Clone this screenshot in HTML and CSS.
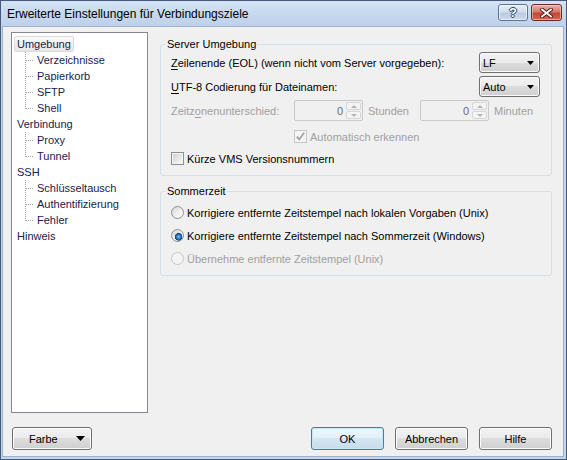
FILE: index.html
```html
<!DOCTYPE html>
<html lang="de">
<head>
<meta charset="utf-8">
<title>Erweiterte Einstellungen für Verbindungsziele</title>
<link rel="stylesheet" href="styles.css">
</head>
<body>
<div class="window">
  <div class="titlebar">
    <span class="title">Erweiterte Einstellungen für Verbindungsziele</span>
    <div class="caption-buttons">
      <div class="cap cap-help">?</div>
      <div class="cap cap-close">
        <svg width="13" height="10" viewBox="0 0 13 10">
          <path d="M2 1.5L11 8.5M11 1.5L2 8.5" stroke="#4a1a14" stroke-width="3.6" stroke-linecap="square" fill="none"/>
          <path d="M2 1.5L11 8.5M11 1.5L2 8.5" stroke="#ffffff" stroke-width="1.8" stroke-linecap="square" fill="none"/>
        </svg>
      </div>
    </div>
  </div>

  <div class="client">
    <div class="main">
      <ul class="tree">
        <li>
          <span class="node selected">Umgebung</span>
          <ul class="children">
            <li><span class="node">Verzeichnisse</span></li>
            <li><span class="node">Papierkorb</span></li>
            <li><span class="node">SFTP</span></li>
            <li><span class="node">Shell</span></li>
          </ul>
        </li>
        <li>
          <span class="node">Verbindung</span>
          <ul class="children">
            <li><span class="node">Proxy</span></li>
            <li><span class="node">Tunnel</span></li>
          </ul>
        </li>
        <li>
          <span class="node">SSH</span>
          <ul class="children">
            <li><span class="node">Schlüsseltausch</span></li>
            <li><span class="node">Authentifizierung</span></li>
            <li><span class="node">Fehler</span></li>
          </ul>
        </li>
        <li><span class="node">Hinweis</span></li>
      </ul>

      <div class="pane">
        <fieldset class="group">
          <legend>Server Umgebung</legend>
          <div class="row">
            <span class="label"><u>Z</u>eilenende (EOL) (wenn nicht vom Server vorgegeben):</span>
            <div class="combo"><span>LF</span><svg class="arrow" width="7" height="4" viewBox="0 0 7 4"><path d="M0 0H7L3.5 4Z"/></svg></div>
          </div>
          <div class="row">
            <span class="label"><u>U</u>TF-8 Codierung für Dateinamen:</span>
            <div class="combo"><span>Auto</span><svg class="arrow" width="7" height="4" viewBox="0 0 7 4"><path d="M0 0H7L3.5 4Z"/></svg></div>
          </div>
          <div class="row">
            <span class="label tz-label disabled">Zeitz<u>o</u>nenunterschied:</span>
            <div class="spin">
              <span class="spin-value">0</span>
              <div class="spin-btns">
                <span class="spin-btn"><i class="tri-up"></i></span>
                <span class="spin-btn"><i class="tri-down"></i></span>
              </div>
            </div>
            <span class="unit disabled">Stunden</span>
            <div class="spin">
              <span class="spin-value">0</span>
              <div class="spin-btns">
                <span class="spin-btn"><i class="tri-up"></i></span>
                <span class="spin-btn"><i class="tri-down"></i></span>
              </div>
            </div>
            <span class="unit disabled">Minuten</span>
          </div>
          <div class="check-row auto-detect">
            <span class="cb cb-disabled">
              <svg width="11" height="11" viewBox="0 0 11 11"><path d="M1.8 5.6L4.2 8.4L9.2 1.8" stroke="#a2a2a2" stroke-width="1.7" fill="none"/></svg>
            </span>
            <span class="disabled">Automatisch erkennen</span>
          </div>
          <div class="check-row vms">
            <span class="cb"></span>
            <span>Kürze VMS Versionsnummern</span>
          </div>
        </fieldset>

        <fieldset class="group dst">
          <legend>Sommerzeit</legend>
          <div class="check-row">
            <span class="radio"></span>
            <span>Korrigiere entfernte Zeitstempel nach lokalen Vorgaben (Unix)</span>
          </div>
          <div class="check-row">
            <span class="radio checked"></span>
            <span>Korrigiere entfernte Zeitstempel nach Sommerzeit (Windows)</span>
          </div>
          <div class="check-row">
            <span class="radio radio-disabled"></span>
            <span class="disabled">Übernehme entfernte Zeitstempel (Unix)</span>
          </div>
        </fieldset>
      </div>
    </div>

    <div class="footer">
      <button type="button" class="btn btn-menu"><span>Farbe</span><svg width="9" height="5" viewBox="0 0 9 5"><path d="M0 0H9L4.5 5Z"/></svg></button>
      <button type="button" class="btn btn-default push">OK</button>
      <button type="button" class="btn">Abbrechen</button>
      <button type="button" class="btn">Hilfe</button>
    </div>
  </div>
</div>
</body>
</html>
```

FILE: styles.css
```css
* {
  box-sizing: border-box;
}

html,
body {
  margin: 0;
  padding: 0;
}

body {
  width: 567px;
  height: 460px;
  overflow: hidden;
  font-family: "Liberation Sans", Arial, sans-serif;
  font-size: 11px;
  color: #000;
  background: #c2d5ec;
}

u {
  text-decoration-thickness: 1px;
  text-underline-offset: 2px;
}

/* ---------- window frame ---------- */

.window {
  width: 567px;
  height: 460px;
  display: flex;
  flex-direction: column;
  border: 1px solid #455a78;
  background: #c2d5ec;
}

.titlebar {
  height: 25px;
  flex: none;
  display: flex;
  align-items: center;
  justify-content: space-between;
  padding: 0 4px 0 6px;
  background: linear-gradient(to bottom, #d4e3f5 0%, #c4d7ee 60%, #bed2ea 100%);
}

.title {
  font-size: 12px;
  color: #000;
}

.caption-buttons {
  align-self: flex-start;
  margin-top: 3px;
  display: flex;
  gap: 3px;
}

.cap {
  height: 17px;
  border-radius: 3px;
  display: flex;
  align-items: center;
  justify-content: center;
}

.cap-help {
  width: 30px;
  border: 1px solid #5d7594;
  background: linear-gradient(to bottom, #e6eef8 0%, #d0def0 48%, #b9cce4 52%, #c8d9ee 100%);
  box-shadow: inset 0 0 0 1px rgba(255, 255, 255, 0.55);
  color: #fff;
  font-weight: bold;
  font-size: 13px;
  line-height: 15px;
  text-shadow: 1px 0 0 #2b3f5c, -1px 0 0 #2b3f5c, 0 1px 0 #2b3f5c, 0 -1px 0 #2b3f5c;
}

.cap-close {
  width: 31px;
  border: 1px solid #6b2a23;
  background: linear-gradient(to bottom, #e9b2a6 0%, #d7796b 45%, #c24634 55%, #cf6a55 100%);
  box-shadow: inset 0 0 0 1px rgba(255, 225, 215, 0.5);
}

/* ---------- dialog body ---------- */

.client {
  flex: 1;
  margin: 0 2px 2px 1px;
  border: 1px solid #9db1cb;
  background: #f0f0f0;
  display: flex;
  flex-direction: column;
  padding: 5px 11px 6px 8px;
}

.main {
  flex: 1;
  display: flex;
  gap: 12px;
  min-height: 0;
}

/* ---------- navigation tree ---------- */

.tree {
  width: 137px;
  flex: none;
  margin: 0;
  padding: 3px 0 0 2px;
  list-style: none;
  background: #fff;
  border: 1px solid #828790;
  color: #17224f;
}

.tree ul {
  margin: 0;
  padding: 0;
  list-style: none;
}

.node {
  display: inline-block;
  height: 16px;
  line-height: 14px;
  padding: 0 2px;
  border: 1px solid transparent;
  border-radius: 2px;
  white-space: nowrap;
}

.node.selected {
  border-color: #d9d9d9;
  background: linear-gradient(to bottom, #fafafa, #e6e6e6);
}

.children > li {
  height: 16px;
  padding-left: 20px;
  background:
    repeating-linear-gradient(to bottom, #a0a0a0 0 1px, transparent 1px 2px) 11px 0 / 1px 100% no-repeat,
    repeating-linear-gradient(to right, #a0a0a0 0 1px, transparent 1px 2px) 12px 8px / 8px 1px no-repeat;
}

.children > li:last-child {
  background:
    repeating-linear-gradient(to bottom, #a0a0a0 0 1px, transparent 1px 2px) 11px 0 / 1px 9px no-repeat,
    repeating-linear-gradient(to right, #a0a0a0 0 1px, transparent 1px 2px) 12px 8px / 8px 1px no-repeat;
}

/* ---------- settings pane ---------- */

.pane {
  flex: 1;
  min-width: 0;
  padding-top: 5px;
}

.group {
  margin: 0;
  min-width: 0;
  padding: 1px 11px 8px 10px;
  border: 1px solid #d5dfe5;
  border-radius: 3px;
}

.group legend {
  padding: 0 1px;
  margin-left: -5px;
  line-height: 14px;
}

.group.dst {
  margin-top: 8px;
  padding-top: 6px;
}

.disabled {
  color: #a0a0a0;
}

.row {
  display: flex;
  align-items: center;
  height: 21px;
}

.row + .row {
  margin-top: 3px;
}

.label {
  white-space: nowrap;
}

.tz-label {
  width: 123px;
  flex: none;
}

.combo {
  margin-left: auto;
  width: 61px;
  height: 21px;
  display: flex;
  align-items: center;
  justify-content: space-between;
  padding: 0 5px 0 3px;
  border: 1px solid #707070;
  border-radius: 3px;
  background: linear-gradient(to bottom, #f2f2f2 0%, #ebebeb 50%, #dddddd 50%, #cfcfcf 100%);
  box-shadow: inset 0 0 0 1px #fbfbfb;
}

.combo .arrow path {
  fill: #000;
}

.spin {
  width: 69px;
  height: 21px;
  flex: none;
  display: flex;
  align-items: stretch;
  justify-content: flex-end;
  border: 1px solid #c9cacb;
  border-radius: 2px;
  background: #f0f0f0;
}

.spin-value {
  align-self: center;
  color: #6d6d6d;
  padding-right: 3px;
}

.spin-btns {
  width: 15px;
  margin: 1px 1px 1px 0;
  display: flex;
  flex-direction: column;
  gap: 1px;
}

.spin-btn {
  flex: 1;
  display: flex;
  align-items: center;
  justify-content: center;
  border: 1px solid #d6d6d6;
  border-radius: 2px;
  background: #f4f4f4;
}

.tri-up,
.tri-down {
  width: 0;
  height: 0;
  border-left: 3px solid transparent;
  border-right: 3px solid transparent;
}

.tri-up {
  border-bottom: 3px solid #b4b4b4;
}

.tri-down {
  border-top: 3px solid #b4b4b4;
}

.unit {
  flex: none;
  margin-left: 5px;
  width: 52px;
}

/* ---------- check boxes and radio buttons ---------- */

.check-row {
  display: flex;
  align-items: center;
  gap: 3px;
  height: 17px;
  white-space: nowrap;
}

.auto-detect {
  margin-top: 7px;
  padding-left: 123px;
}

.vms {
  margin-top: 5px;
}

.dst .check-row + .check-row {
  margin-top: 6px;
}

.cb {
  width: 13px;
  height: 13px;
  flex: none;
  display: flex;
  align-items: center;
  justify-content: center;
  border: 1px solid #8e8f8f;
  padding: 1px;
  background: linear-gradient(135deg, #cfd2d6, #f8f8f9) content-box, #f4f4f4;
}

.cb-disabled {
  border-color: #c6c6c6;
  padding: 0;
  background: #f4f4f4;
}

.radio {
  width: 13px;
  height: 13px;
  flex: none;
  border-radius: 50%;
  border: 1px solid #8e8f8f;
  background: linear-gradient(135deg, #d3d5d8 0%, #f2f2f2 60%, #fdfdfd 100%);
}

.radio.checked {
  background:
    radial-gradient(circle at 60% 62%, #8ad7fb 0, #3b8fd0 1.5px, #1d5596 3px, #12386c 3.6px, transparent 4px),
    linear-gradient(135deg, #d3d5d8 0%, #f2f2f2 60%, #fdfdfd 100%);
}

.radio-disabled {
  border-color: #c6c6c6;
  background: #f4f4f4;
}

/* ---------- bottom buttons ---------- */

.footer {
  flex: none;
  margin-top: 14px;
  display: flex;
  gap: 11px;
}

.btn {
  width: 73px;
  height: 23px;
  margin: 0;
  padding: 0;
  display: flex;
  align-items: center;
  justify-content: center;
  font: inherit;
  color: #000;
  border: 1px solid #707070;
  border-radius: 3px;
  background: linear-gradient(to bottom, #f2f2f2 0%, #ebebeb 50%, #dddddd 50%, #cfcfcf 100%);
  box-shadow: inset 0 0 0 1px #fbfbfb;
}

.btn-menu {
  width: 80px;
  margin-left: 1px;
  justify-content: space-between;
  padding: 0 6px 0 16px;
}

.btn-menu path {
  fill: #000;
}

.btn-default {
  border-color: #3c7fb1;
  box-shadow: inset 0 0 0 1px #c6e9f9;
  background: linear-gradient(to bottom, #eaf6fd 0%, #e4f0f8 50%, #d4e6f2 50%, #c6dbe9 100%);
}

.push {
  margin-left: auto;
}
```
